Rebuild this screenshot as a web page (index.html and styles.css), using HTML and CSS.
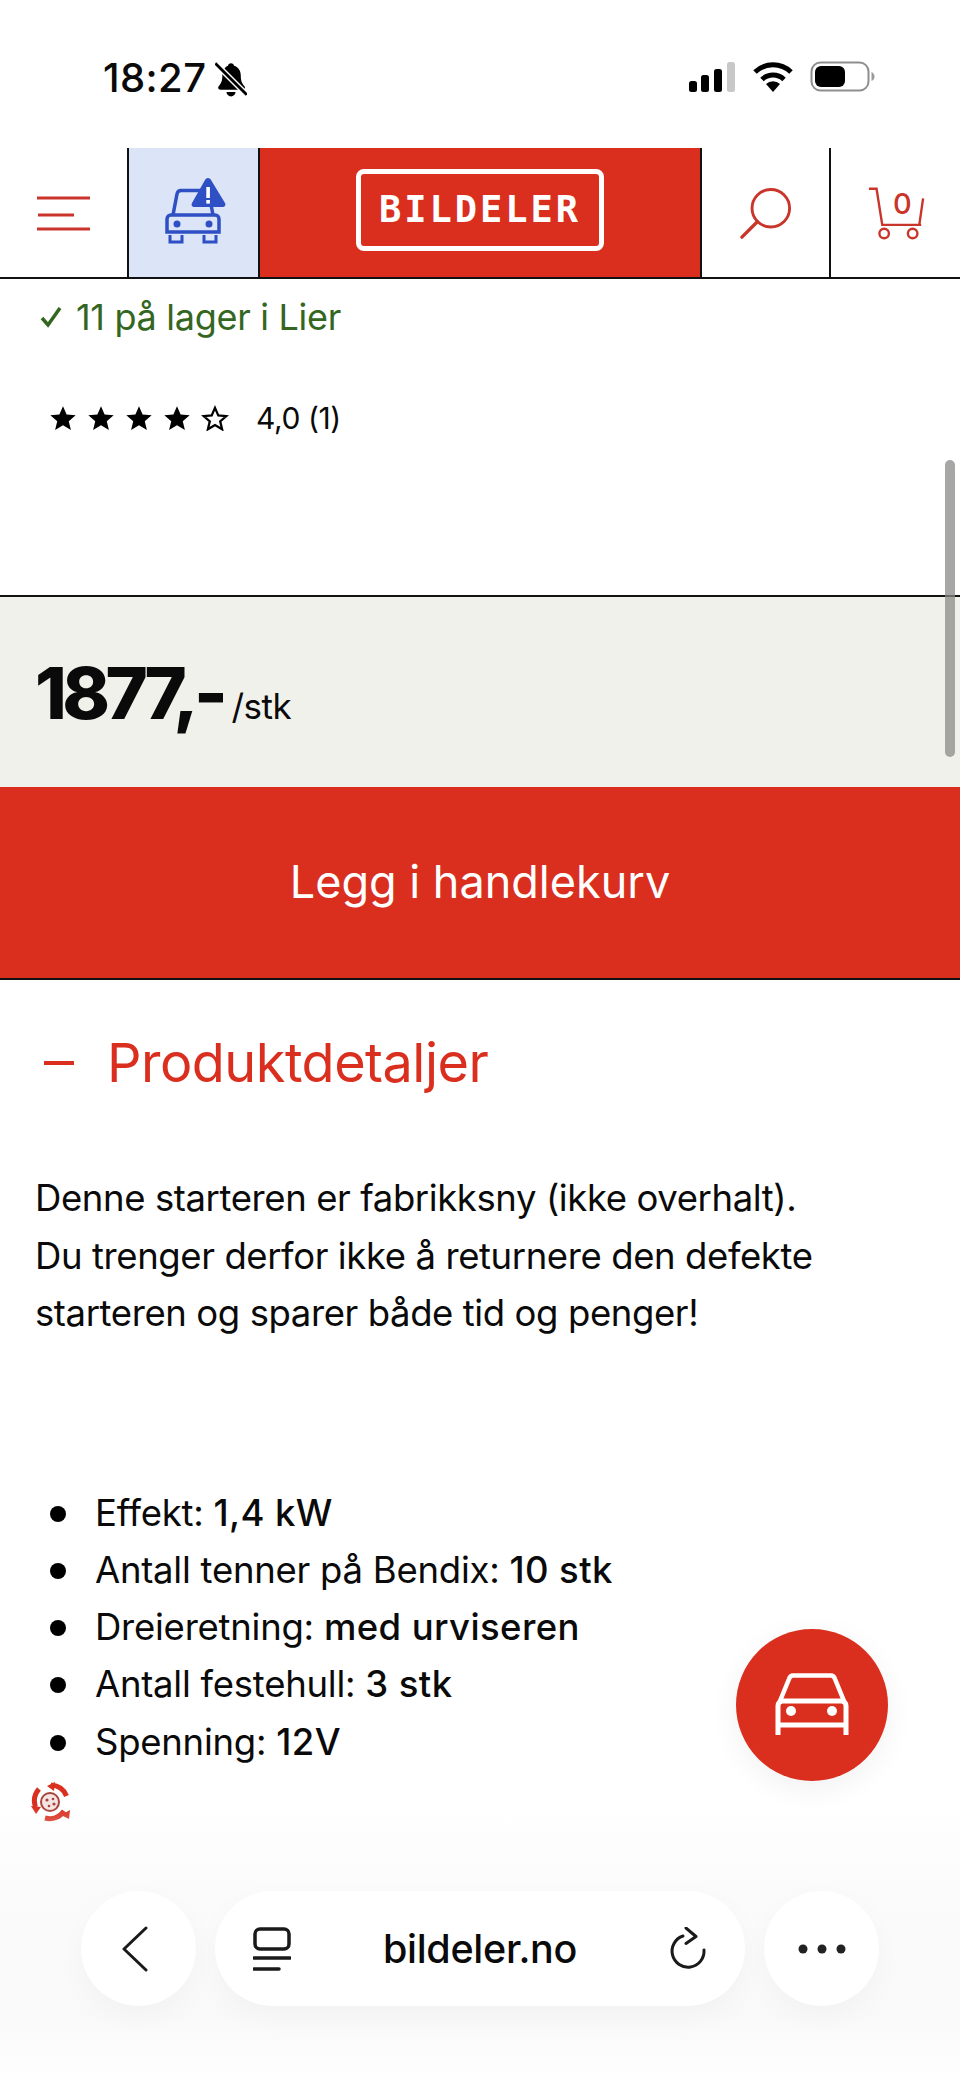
FILE: index.html
```html
<!DOCTYPE html>
<html lang="no">

<head>
    <meta charset="UTF-8">
    <meta name="viewport" content="width=device-width, initial-scale=1.0">
    <title>Bildeler</title>
    <link rel="stylesheet" href="styles.css">
</head>

<body>
    <div class="phone">
        <!-- statuslinje -->
        <div class="status">
            <div class="status-left">
                <span class="time">18:27</span>
                <svg class="bell" width="32" height="36" viewBox="2 1 28 32">
                    <path d="M16 3c1.500 0 2.500 1 2.700 2.300 4 1.200 6 4.500 6 8.700 0 4.500 1 6.500 3.300 9.500 1 1.300.3 3-1.500 3H6.500c-1.800 0-2.500-1.700-1.500-3 2.300-3 3.300-5 3.300-9.500 0-4.200 2-7.500 5-8.700C13.500 4 14.500 3 16 3z" fill="#000" />
                    <path d="M12 28.500h8a4 4 0 0 1-8 0z" fill="#000" />
                    <path d="M2 3l28 28" stroke="#fff" stroke-width="5" />
                    <path d="M2 3l28 28" stroke="#000" stroke-width="2.500" />
                </svg>
            </div>
            <div class="status-right">
                <svg width="48" height="32" viewBox="0 0 48 32">
                    <rect x="1" y="20" width="8" height="11" rx="2.500" fill="#000" />
                    <rect x="13" y="14" width="8" height="17" rx="2.500" fill="#000" />
                    <rect x="26" y="8" width="8" height="23" rx="2.500" fill="#000" />
                    <rect x="39" y="1" width="8" height="30" rx="2.500" fill="#c8c8c8" />
                </svg>
                <svg class="wifi" width="42" height="32" viewBox="0 0 42 32">
                    <path d="M3 11a26 26 0 0 1 36 0" fill="none" stroke="#000" stroke-width="5" />
                    <path d="M10 18.500a16 16 0 0 1 22 0" fill="none" stroke="#000" stroke-width="5" />
                    <path d="M14 23a10 10 0 0 1 14 0l-7 8z" fill="#000" />
                </svg>
                <svg class="battery" width="66" height="32" viewBox="0 0 66 32">
                    <rect x="1.500" y="1.500" width="57" height="28" rx="9" fill="none" stroke="#8e8e8e" stroke-width="2" />
                    <rect x="5" y="5" width="30" height="21" rx="6" fill="#000" />
                    <path d="M61.500 11c2 1 3 2.500 3 4.500s-1 3.500-3 4.500z" fill="#9a9a9a" />
                </svg>
            </div>
        </div>

        <!-- meny -->
        <header class="topbar">
            <div class="cell cell-menu">
                <svg width="56" height="36" viewBox="0 0 56 36">
                    <path d="M1 3h53M2 20h36M1 34h53" fill="none" stroke="#c9352a" stroke-width="3" />
                </svg>
            </div>
            <div class="cell cell-car">
                <svg width="64" height="70" viewBox="0 0 64 70">
                    <path d="M9 38l4-21c.5-2.500 2-3.500 4-3.500h24c2 0 3.500 1 4 3.500l4 21" fill="none" stroke="#2f4fc4" stroke-width="3.500" />
                    <path d="M3 42c0-2.500 2-4 4-4h44c2 0 4 1.500 4 4v13H3z" fill="none" stroke="#2f4fc4" stroke-width="3.500" />
                    <circle cx="13" cy="47" r="3.500" fill="#2f4fc4" />
                    <circle cx="45" cy="47" r="3.500" fill="#2f4fc4" />
                    <path d="M6 58v7h12v-7M40 58v7h12v-7" fill="none" stroke="#2f4fc4" stroke-width="3" />
                    <path d="M44 1c1.500 0 2.500 1 3 2l14 23c1 2 0 4-2.500 4h-28c-2.500 0-3.500-2-2.500-4L41 3c.5-1 1.500-2 3-2z" fill="#2f4fc4" />
                    <rect x="42.300" y="10" width="3.600" height="11" fill="#fff" />
                    <rect x="42.300" y="23" width="3.600" height="3.600" fill="#fff" />
                </svg>
            </div>
            <div class="cell cell-logo"><span class="logo">BILDELER</span></div>
            <div class="cell cell-search">
                <svg width="52" height="52" viewBox="0 0 54 54">
                    <circle cx="32" cy="21" r="19.500" fill="none" stroke="#c9352a" stroke-width="3" />
                    <path d="M18 35L2 51" fill="none" stroke="#c9352a" stroke-width="3.500" stroke-linecap="round" />
                </svg>
            </div>
            <div class="cell cell-cart">
                <svg width="57" height="55" viewBox="0 0 60 56">
                    <path d="M1 2h8l6 38h41M58 12l-4 28" fill="none" stroke="#c9352a" stroke-width="2.500" />
                    <circle cx="17" cy="49" r="5" fill="none" stroke="#c9352a" stroke-width="2.500" />
                    <circle cx="47" cy="49" r="5" fill="none" stroke="#c9352a" stroke-width="2.500" />
                </svg>
                <span class="cart-count">0</span>
            </div>
        </header>

        <main>
            <section class="info">
                <p class="stock">
                    <svg width="22" height="22" viewBox="0 0 22 22">
                        <path d="M2 12l6 7L20 2" fill="none" stroke="#33661f" stroke-width="3.500" />
                    </svg>
                    <span>11 på lager i Lier</span>
                </p>
                <div class="rating">
                    <div class="stars">
                        <svg width="28" height="26" viewBox="0 0 24 23"><path class="star-on" d="M12 1l3.200 7.400 8 .7-6.100 5.200 1.900 7.800-7-4.200-7 4.200 1.900-7.800L.8 9.100l8-.7z" /></svg>
                        <svg width="28" height="26" viewBox="0 0 24 23"><path class="star-on" d="M12 1l3.200 7.400 8 .7-6.100 5.200 1.900 7.800-7-4.200-7 4.200 1.900-7.800L.8 9.100l8-.7z" /></svg>
                        <svg width="28" height="26" viewBox="0 0 24 23"><path class="star-on" d="M12 1l3.200 7.400 8 .7-6.100 5.200 1.900 7.800-7-4.200-7 4.200 1.900-7.800L.8 9.100l8-.7z" /></svg>
                        <svg width="28" height="26" viewBox="0 0 24 23"><path class="star-on" d="M12 1l3.200 7.400 8 .7-6.100 5.200 1.900 7.800-7-4.200-7 4.200 1.900-7.800L.8 9.100l8-.7z" /></svg>
                        <svg width="28" height="26" viewBox="0 0 24 23"><path class="star-off" d="M12 2.500l2.900 6.700 7.200.6-5.500 4.700 1.700 7-6.300-3.800-6.300 3.800 1.700-7-5.500-4.700 7.200-.6z" /></svg>
                    </div>
                    <span class="score">4,0 (1)</span>
                </div>
            </section>

            <section class="price-band">
                <span class="price">1877,-</span>
                <span class="unit">/stk</span>
            </section>

            <button class="buy">Legg i handlekurv</button>

            <section class="details">
                <h2 class="details-title"><span class="minus"></span>Produktdetaljer</h2>
                <p class="intro">Denne starteren er fabrikksny (ikke overhalt).<br>Du trenger derfor ikke å returnere den defekte<br>starteren og sparer både tid og penger!</p>
                <ul class="specs">
                    <li>Effekt: <b>1,4 kW</b></li>
                    <li>Antall tenner på Bendix: <b>10 stk</b></li>
                    <li>Dreieretning: <b>med urviseren</b></li>
                    <li>Antall festehull: <b>3 stk</b></li>
                    <li>Spenning: <b>12V</b></li>
                </ul>
                <svg class="recycle" width="40" height="40" viewBox="0 0 40 40">
                    <path d="M20 3c7 .5 13 4.500 15.500 11" fill="none" stroke="#d9301f" stroke-width="5" />
                    <path d="M33 29c-4 6-11 9-19 7" fill="none" stroke="#d9301f" stroke-width="5" />
                    <path d="M4.500 25C2.500 19 3.500 12 8 7" fill="none" stroke="#d9301f" stroke-width="5" />
                    <path d="M39 28l-1 9-8-4zM24 0l-1 9-7-5zM0 24l5 8 5-7z" fill="#d9301f" />
                    <circle cx="19" cy="20" r="9" fill="#f4e4e2" stroke="#a8443c" stroke-width="2" />
                    <circle cx="16" cy="18" r="1.600" fill="#a8443c" />
                    <circle cx="22" cy="17" r="1.300" fill="#a8443c" />
                    <circle cx="23" cy="22" r="1.600" fill="#a8443c" />
                    <circle cx="18" cy="24" r="1.300" fill="#a8443c" />
                </svg>
            </section>
        </main>

        <div class="scrollbar"></div>

        <button class="fab">
            <svg width="74" height="64" viewBox="0 0 74 64">
                <path d="M5 28l9-22c.7-2 2-3.500 4-3.500h38c2 0 3.300 1.500 4 3.500l9 22" fill="none" stroke="#fff" stroke-width="4.500" />
                <path d="M3 62V33c0-3 2-5 5-5h58c3 0 5 2 5 5v29M3 52h68" fill="none" stroke="#fff" stroke-width="5" />
                <circle cx="16" cy="38" r="5" fill="#fff" />
                <circle cx="57" cy="38" r="5" fill="#fff" />
            </svg>
        </button>

        <!-- safari verktoylinje -->
        <nav class="toolbar">
            <div class="round">
                <svg class="back" width="26" height="46" viewBox="0 0 26 46">
                    <path d="M24 2L2 23l22 21" fill="none" stroke="#1a1a1a" stroke-width="3" stroke-linecap="round" stroke-linejoin="round" />
                </svg>
            </div>
            <div class="address">
                <svg width="38" height="44" viewBox="0 0 38 44">
                    <rect x="2" y="2" width="34" height="20" rx="5" fill="none" stroke="#1a1a1a" stroke-width="3.500" />
                    <path d="M1 31h36M1 42h25" fill="none" stroke="#1a1a1a" stroke-width="3.500" stroke-linecap="round" />
                </svg>
                <span class="url">bildeler.no</span>
                <svg width="38" height="44" viewBox="0 0 38 44">
                    <path d="M14 9A16 16 0 1 0 35 23" fill="none" stroke="#1a1a1a" stroke-width="3" stroke-linecap="round" />
                    <path d="M17 1l10 8.500-10 7" fill="none" stroke="#1a1a1a" stroke-width="3" stroke-linecap="round" stroke-linejoin="round" />
                </svg>
            </div>
            <div class="round">
                <svg width="48" height="10" viewBox="0 0 48 10">
                    <circle cx="5" cy="5" r="4.500" fill="#222" />
                    <circle cx="24" cy="5" r="4.500" fill="#222" />
                    <circle cx="43" cy="5" r="4.500" fill="#222" />
                </svg>
            </div>
        </nav>
    </div>
</body>

</html>
```

FILE: styles.css
```css
* {
    margin: 0;
    padding: 0;
    box-sizing: border-box;
}

body {
    background-color: white;
    font-family: "Inter", "Liberation Sans", sans-serif;
    color: #0a0a0a;
}

.phone {
    position: relative;
    width: 960px;
    height: 2087px;
    overflow: hidden;
}

.status {
    height: 148px;
    display: flex;
    justify-content: space-between;
    padding: 56px 0 0 103px;
}

.status-left {
    display: flex;
    align-items: flex-start;
    gap: 9px;
}

.time {
    font-size: 40px;
    font-weight: 500;
    line-height: 44px;
    letter-spacing: 0.4px;
}

.bell {
    margin-top: 5px;
}

.status-right {
    display: flex;
    align-items: flex-start;
    gap: 16px;
    padding: 22px 84px 0 0;
    height: 60px;
    margin-top: -17px;
}

.topbar {
    height: 131px;
    display: flex;
    border-bottom: 2px solid #111;
}

.cell {
    display: flex;
    align-items: center;
    justify-content: center;
    border-right: 2px solid #111;
}

.cell-menu {
    width: 129px;
}

.cell-car {
    width: 131px;
    background-color: #dbe5f7;
    padding: 0 0 2px 4px;
}

.cell-logo {
    width: 442px;
    background-color: #da2f1f;
    padding-bottom: 5px;
}

.logo {
    width: 248px;
    height: 82px;
    border: 5px solid white;
    border-radius: 8px;
    color: white;
    font-family: "DejaVu Sans Mono", "Liberation Mono", monospace;
    font-size: 37px;
    font-weight: 700;
    letter-spacing: 3px;
    line-height: 72px;
    text-align: center;
}

.cell-search {
    width: 129px;
    padding-top: 2px;
}

.cell-cart {
    flex: 1;
    border-right: none;
    position: relative;
    padding: 2px 0 0 2px;
}

.cart-count {
    position: absolute;
    left: 62px;
    top: 38px;
    font-size: 29px;
    color: #c9352a;
    font-weight: 500;
}

.info {
    height: 318px;
    border-bottom: 2px solid #111;
}

.stock {
    display: flex;
    align-items: center;
    gap: 14px;
    color: #33661f;
    font-size: 36px;
    line-height: 44px;
    letter-spacing: -0.3px;
    padding: 16px 0 0 40px;
}

.rating {
    display: flex;
    align-items: center;
    margin: 61px 0 0 49px;
}

.stars {
    display: flex;
    gap: 10px;
}

.star-on {
    fill: #000;
}

.star-off {
    fill: none;
    stroke: #000;
    stroke-width: 2;
}

.score {
    font-size: 30px;
    margin-left: 27px;
    letter-spacing: -0.4px;
}

.price-band {
    height: 190px;
    background-color: #f1f1ec;
    display: flex;
    align-items: baseline;
    padding: 52px 0 0 35px;
}

.price {
    font-size: 72px;
    font-weight: 800;
    letter-spacing: -4.6px;
    line-height: 88px;
}

.unit {
    font-size: 35px;
    margin-left: 8px;
    letter-spacing: -0.5px;
}

.buy {
    display: block;
    width: 100%;
    height: 193px;
    background-color: #da2f1f;
    border: none;
    border-bottom: 2px solid #111;
    color: white;
    font-family: inherit;
    font-size: 45px;
    letter-spacing: 0;
    padding-bottom: 2px;
}

.details {
    padding: 0 35px;
}

.details-title {
    display: flex;
    align-items: center;
    color: #da2f1f;
    font-size: 54px;
    font-weight: 400;
    letter-spacing: -0.5px;
    line-height: 64px;
    padding: 51px 0 0 9px;
}

.minus {
    width: 30px;
    height: 4px;
    background-color: #da2f1f;
    margin-right: 33px;
}

.intro {
    font-size: 36.500px;
    line-height: 57.500px;
    letter-spacing: -0.4px;
    margin-top: 75px;
}

.specs {
    list-style: none;
    font-size: 36.500px;
    line-height: 57.300px;
    letter-spacing: -0.25px;
    margin-top: 142px;
    padding-left: 60px;
}

.specs li {
    position: relative;
}

.specs li::before {
    content: "";
    position: absolute;
    left: -45px;
    top: 21px;
    width: 16px;
    height: 16px;
    border-radius: 50%;
    background-color: #000;
}

.specs b {
    font-weight: 500;
    letter-spacing: 0.4px;
}

.recycle {
    display: block;
    margin: 11px 0 0 -4px;
}

.scrollbar {
    position: absolute;
    left: 945px;
    top: 460px;
    width: 10px;
    height: 297px;
    border-radius: 5px;
    background-color: #8a8a88;
    opacity: 0.75;
}

.fab {
    position: absolute;
    left: 736px;
    top: 1629px;
    width: 152px;
    height: 152px;
    border: none;
    border-radius: 50%;
    background-color: #da2f1f;
    box-shadow: 0 8px 30px rgba(0, 0, 0, 0.06);
    display: flex;
    align-items: center;
    justify-content: center;
}

.toolbar {
    position: absolute;
    left: 0;
    right: 0;
    bottom: 0;
    height: 280px;
    background: linear-gradient(to bottom, rgba(250, 250, 250, 0), #fbfbfb 28%, #f9f9f9 75%, white 100%);
    display: flex;
    gap: 19px;
    padding: 84px 81px 0;
}

.round {
    width: 115px;
    height: 115px;
    flex: none;
    border-radius: 50%;
    background-color: white;
    display: flex;
    align-items: center;
    justify-content: center;
    box-shadow: 0 10px 30px rgba(0, 0, 0, 0.03);
}

.back {
    margin-right: 8px;
}

.address {
    flex: 1;
    height: 115px;
    border-radius: 58px;
    background-color: white;
    display: flex;
    align-items: center;
    justify-content: space-between;
    padding: 0 38px 0 38px;
    box-shadow: 0 10px 30px rgba(0, 0, 0, 0.03);
}

.url {
    font-size: 39.500px;
    font-weight: 500;
    letter-spacing: -0.3px;
}
```
